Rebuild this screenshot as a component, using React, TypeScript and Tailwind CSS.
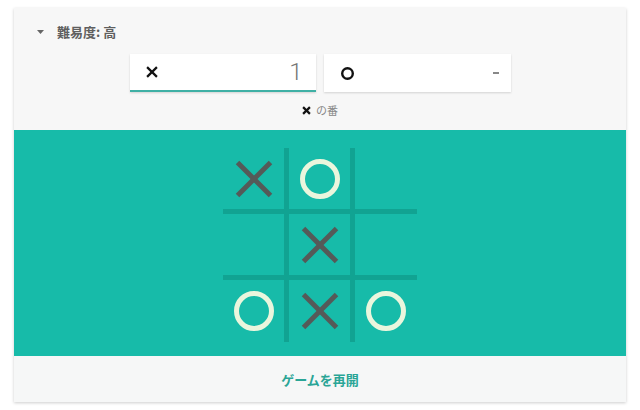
import React from "react";

const XMark = ({ size = 38, stroke = 5, color = "#555a58" }: { size?: number; stroke?: number; color?: string }) => (
  <svg width={size} height={size} viewBox={`0 0 ${size} ${size}`}>
    <line x1={stroke / 2} y1={stroke / 2} x2={size - stroke / 2} y2={size - stroke / 2} stroke={color} strokeWidth={stroke} />
    <line x1={size - stroke / 2} y1={stroke / 2} x2={stroke / 2} y2={size - stroke / 2} stroke={color} strokeWidth={stroke} />
  </svg>
);

const OMark = ({ size = 40, stroke = 5, color = "#eaf6dd" }: { size?: number; stroke?: number; color?: string }) => (
  <svg width={size} height={size} viewBox={`0 0 ${size} ${size}`}>
    <circle cx={size / 2} cy={size / 2} r={size / 2 - stroke / 2} fill="none" stroke={color} strokeWidth={stroke} />
  </svg>
);

const board = ["x", "o", "", "", "x", "", "o", "x", "o"];

export default function App() {
  return (
    <div
      className="w-[640px] h-[410px] bg-white pt-[8px] px-[14px]"
      style={{ fontFamily: '"Noto Sans CJK JP", Roboto, "Noto Sans", sans-serif' }}
    >
      <div className="w-[612px] bg-[#f7f7f7] shadow-[0_1px_3px_rgba(0,0,0,0.2)] flex flex-col">
        <div className="h-[46px] flex items-center pl-[23px] pt-[1px]">
          <svg width="7" height="4" viewBox="0 0 7 4" className="mr-[13px]">
            <polygon points="0,0 7,0 3.5,4" fill="#666" />
          </svg>
          <span className="text-[13px] font-bold text-[#5f5f5f] leading-none">難易度: 高</span>
        </div>
        <div className="flex justify-center gap-[8px]">
          <div className="w-[186px] h-[38px] bg-white shadow-[0_1px_2px_rgba(0,0,0,0.15)] border-b-2 border-[#3fb0a5] flex items-center justify-between pl-[16px] pr-[13px]">
            <XMark size={12} stroke={2.2} color="#111" />
            <span className="text-[24px] font-light text-[#777] leading-none" style={{ fontFamily: "Roboto, sans-serif" }}>1</span>
          </div>
          <div className="w-[187px] h-[38px] bg-white shadow-[0_1px_2px_rgba(0,0,0,0.15)] flex items-center justify-between pl-[17px] pr-[12px]">
            <OMark size={13} stroke={2.4} color="#111" />
            <span className="w-[6px] h-[2px] bg-[#888]" />
          </div>
        </div>
        <div className="h-[38px] flex items-center justify-center gap-[5px] pb-[2px]">
          <XMark size={9} stroke={2.2} color="#111" />
          <span className="text-[11px] text-[#888] leading-none">の番</span>
        </div>
        <div className="h-[226px] bg-[#17bba9] flex justify-center pt-[18px]">
          <div className="grid grid-cols-[61px_61px_62px] grid-rows-[61px_61px_62px] gap-[5px] bg-[#11a392] w-[194px] h-[194px]">
            {board.map((c, i) => (
              <div key={i} className="bg-[#17bba9] flex items-center justify-center">
                {c === "x" && <XMark />}
                {c === "o" && <OMark />}
              </div>
            ))}
          </div>
        </div>
        <div className="h-[46px] flex items-center justify-center bg-[#f6f7f7]">
          <span className="text-[13px] font-bold text-[#2aa596] leading-none">ゲームを再開</span>
        </div>
      </div>
    </div>
  );
}
